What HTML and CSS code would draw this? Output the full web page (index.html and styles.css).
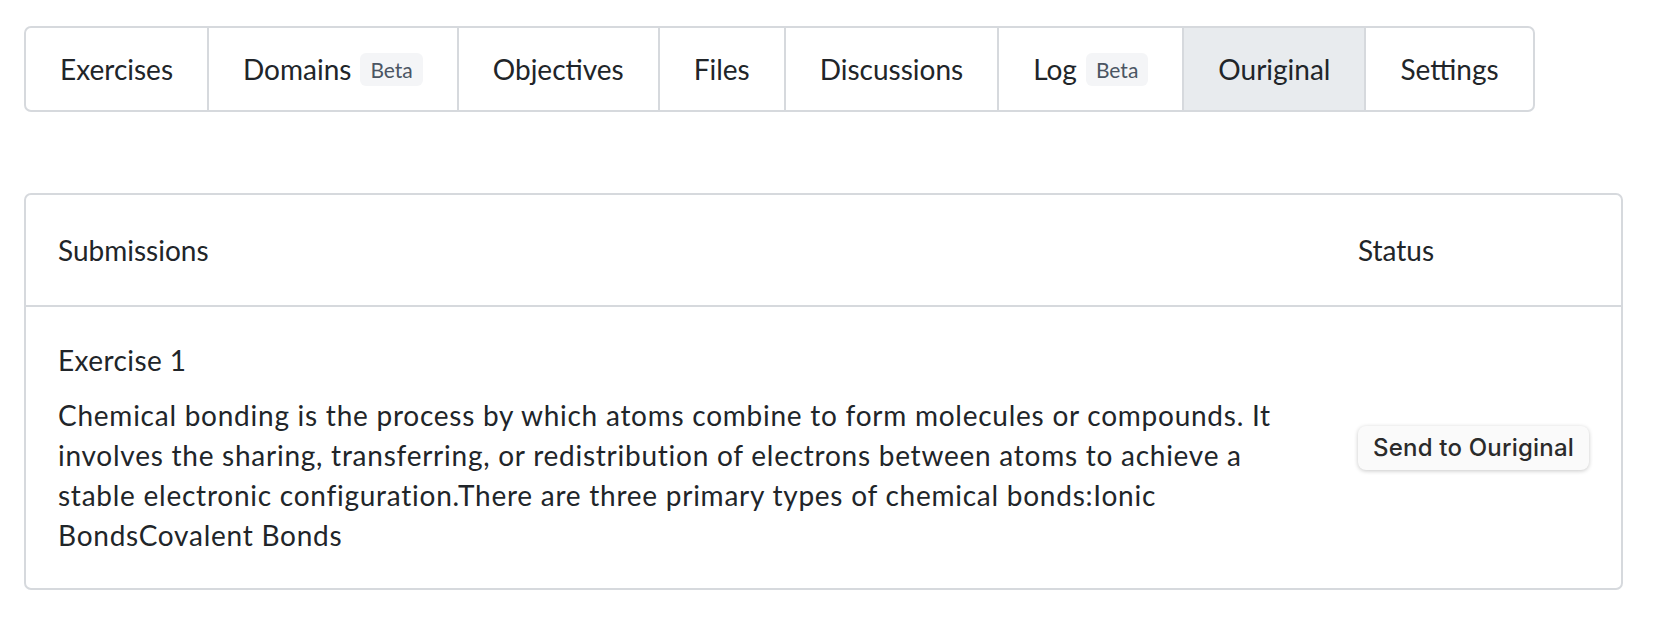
FILE: index.html
```html
<!DOCTYPE html>
<html lang="en">
<head>
    <meta charset="UTF-8">
    <meta name="viewport" content="width=device-width, initial-scale=1.0">
    <title>Ouriginal</title>
    <link rel="stylesheet" href="styles.css">
</head>
<body>
    <nav class="tabs">
        <a class="tab" href="#">Exercises</a>
        <a class="tab" href="#">Domains <span class="badge">Beta</span></a>
        <a class="tab" href="#">Objectives</a>
        <a class="tab" href="#">Files</a>
        <a class="tab" href="#">Discussions</a>
        <a class="tab" href="#">Log <span class="badge">Beta</span></a>
        <a class="tab active" href="#">Ouriginal</a>
        <a class="tab" href="#">Settings</a>
    </nav>

    <div class="card">
        <div class="card-head">
            <div class="col">Submissions</div>
            <div class="col">Status</div>
        </div>
        <div class="card-row">
            <div class="col">
                <h3 class="exercise-title">Exercise 1</h3>
                <p class="exercise-text">Chemical bonding is the process by which atoms combine to form molecules or compounds. It involves the sharing, transferring, or redistribution of electrons between atoms to achieve a stable electronic configuration.There are three primary types of chemical bonds:Ionic BondsCovalent Bonds</p>
            </div>
            <div class="col status">
                <button class="send-btn" type="button">Send to Ouriginal</button>
            </div>
        </div>
    </div>
</body>
</html>
```

FILE: styles.css
```css
body {
    margin: 0;
    padding: 26px 37px 26px 24px;
    font-family: Lato, "Open Sans", sans-serif;
    font-size: 28px;
    line-height: 40px;
    color: #212529;
    background-color: #fff;
}

.tabs {
    display: inline-flex;
    border: 2px solid #d6d9dd;
    border-radius: 7px;
    overflow: hidden;
}

.tab {
    display: flex;
    align-items: center;
    gap: 9px;
    padding: 21px 34px;
    color: #212529;
    text-decoration: none;
    border-left: 2px solid #d6d9dd;
}

.tab:first-child {
    border-left: none;
}

.tab.active {
    background-color: #e8ebee;
}

.badge {
    display: inline-block;
    padding: 0 10px;
    font-size: 21px;
    line-height: 33px;
    color: #4b5563;
    background-color: #f4f5f7;
    border-radius: 6px;
}

.card {
    margin-top: 81px;
    border: 2px solid #d6d9dd;
    border-radius: 7px;
}

.card-head,
.card-row {
    display: grid;
    grid-template-columns: 1fr 295px;
}

.card-head {
    padding: 35px 0;
    border-bottom: 2px solid #d6d9dd;
}

.card-row {
    padding: 33px 0 33px;
}

.col {
    padding: 0 32px;
}

.exercise-title {
    margin: 0;
    font-size: 28px;
    font-weight: normal;
    letter-spacing: 0.4px;
}

.exercise-text {
    margin: 15px 0 0;
    letter-spacing: 0.75px;
}

.status {
    display: flex;
    align-items: center;
}

.send-btn {
    height: 44px;
    padding: 0 15px;
    font-family: Inter, sans-serif;
    font-size: 24px;
    font-weight: 500;
    letter-spacing: 0.2px;
    color: #2b2b2b;
    background-color: #fafafa;
    border: none;
    border-radius: 8px;
    box-shadow: 0 1px 4px rgba(0, 0, 0, 0.22);
}
```
